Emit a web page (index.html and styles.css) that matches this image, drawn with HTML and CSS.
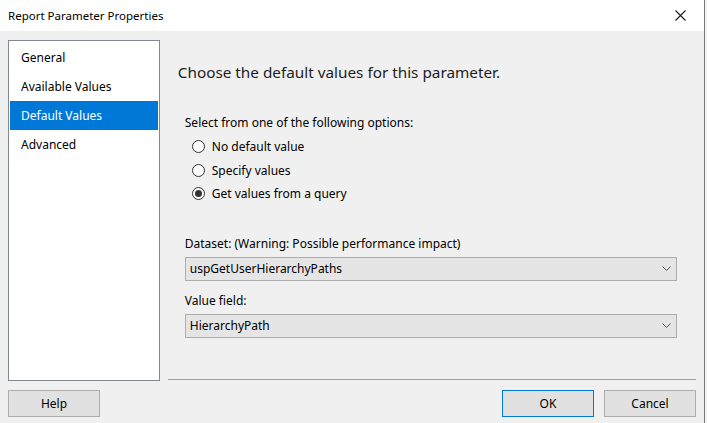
FILE: index.html
```html
<!DOCTYPE html>
<html lang="en">

    <head>
        <meta charset="UTF-8">
        <meta name="viewport" content="width=device-width, initial-scale=1.0">
        <title>Report Parameter Properties</title>
        <link rel="stylesheet" href="styles.css">
    </head>

    <body>
        <div class="window">
            <div class="titlebar">
                <span class="title">Report Parameter Properties</span>
                <button class="close-btn" title="Close">
                    <svg width="11" height="11" viewBox="0 0 11 11">
                        <path d="M0.5 0.5 L10.5 10.5 M10.5 0.5 L0.5 10.5" stroke="#1a1a1a" stroke-width="1.1" fill="none"/>
                    </svg>
                </button>
            </div>

            <div class="main">
                <!-- список разделов слева -->
                <ul class="sidebar">
                    <li class="side-item">General</li>
                    <li class="side-item">Available Values</li>
                    <li class="side-item active">Default Values</li>
                    <li class="side-item">Advanced</li>
                </ul>

                <div class="content">
                    <h1 class="heading">Choose the default values for this parameter.</h1>

                    <div class="options">
                        <div class="label">Select from one of the following options:</div>
                        <div class="radio-group">
                            <label class="radio-row"><span class="radio"></span>No default value</label>
                            <label class="radio-row"><span class="radio"></span>Specify values</label>
                            <label class="radio-row"><span class="radio checked"></span>Get values from a query</label>
                        </div>

                        <div class="label dataset-label">Dataset: (Warning: Possible performance impact)</div>
                        <div class="combo">
                            <span>uspGetUserHierarchyPaths</span>
                            <svg class="chevron" width="9" height="5" viewBox="0 0 9 5">
                                <path d="M0.5 0.5 L4.5 4.5 L8.5 0.5" stroke="#555" stroke-width="1" fill="none"/>
                            </svg>
                        </div>

                        <div class="label field-label">Value field:</div>
                        <div class="combo">
                            <span>HierarchyPath</span>
                            <svg class="chevron" width="9" height="5" viewBox="0 0 9 5">
                                <path d="M0.5 0.5 L4.5 4.5 L8.5 0.5" stroke="#555" stroke-width="1" fill="none"/>
                            </svg>
                        </div>
                    </div>
                </div>
            </div>

            <div class="footer">
                <button class="btn">Help</button>
                <div class="footer-right">
                    <button class="btn btn-default">OK</button>
                    <button class="btn">Cancel</button>
                </div>
            </div>
        </div>
    </body>

</html>
```

FILE: styles.css
```css
body {
    margin: 0;
    background-color: #f0f0f0;
    font-family: "Noto Sans", "Open Sans", sans-serif;
    font-size: 12px;
    color: #000;
}

.window {
    box-sizing: border-box;
    width: 705px;
    height: 423px;
    background-color: #f0f0f0;
    border-right: 1px solid #7a7a7a;
}

.titlebar {
    display: flex;
    justify-content: space-between;
    align-items: center;
    height: 31px;
    padding-left: 8px;
    background-color: #fff;
}

.title {
    font-size: 11.5px;
}

.close-btn {
    display: flex;
    align-items: center;
    justify-content: center;
    width: 40px;
    height: 31px;
    padding: 0;
    margin-right: 4px;
    border: none;
    background: none;
}

.main {
    display: flex;
    gap: 8px;
    padding: 9px 8px 0 8px;
}

.sidebar {
    box-sizing: border-box;
    width: 152px;
    height: 341px;
    margin: 0;
    padding: 2px 1px 0 1px;
    list-style: none;
    background-color: #fff;
    border: 1px solid #828790;
}

.side-item {
    height: 29px;
    line-height: 29px;
    padding-left: 11px;
}

.side-item.active {
    background-color: #0078d7;
    color: #fff;
}

.content {
    box-sizing: border-box;
    width: 529px;
    height: 340px;
    padding-left: 10px;
    border-bottom: 1px solid #a0a0a0;
}

.heading {
    margin: 20px 0 0 0;
    font-size: 15.3px;
    font-weight: normal;
    line-height: 24px;
    color: #1e1e1e;
}

.options {
    margin: 30px 0 0 7px;
}

.label {
    line-height: 18px;
}

.radio-group {
    margin-top: 3px;
}

.radio-row {
    display: flex;
    align-items: center;
    gap: 7px;
    height: 23.5px;
    padding-left: 7px;
}

.radio {
    box-sizing: border-box;
    display: flex;
    align-items: center;
    justify-content: center;
    width: 13px;
    height: 13px;
    border: 1px solid #333;
    border-radius: 50%;
    background-color: #fff;
}

.radio.checked::after {
    content: "";
    width: 7px;
    height: 7px;
    border-radius: 50%;
    background-color: #333;
}

.dataset-label {
    margin-top: 29px;
}

.field-label {
    margin-top: 11px;
}

.combo {
    box-sizing: border-box;
    display: flex;
    justify-content: space-between;
    align-items: center;
    width: 492px;
    height: 24px;
    margin-top: 4px;
    padding: 0 5px 0 4px;
    background-color: #e5e5e5;
    border: 1px solid #adadad;
}

.footer {
    display: flex;
    justify-content: space-between;
    padding: 9px 8px 0 8px;
}

.footer-right {
    display: flex;
    gap: 10px;
}

.btn {
    box-sizing: border-box;
    width: 92px;
    height: 27px;
    padding: 0;
    background-color: #e1e1e1;
    border: 1px solid #adadad;
    font-family: "Noto Sans", "Open Sans", sans-serif;
    font-size: 12px;
    color: #000;
}

.btn-default {
    border: 1px solid #0078d7;
}
```
